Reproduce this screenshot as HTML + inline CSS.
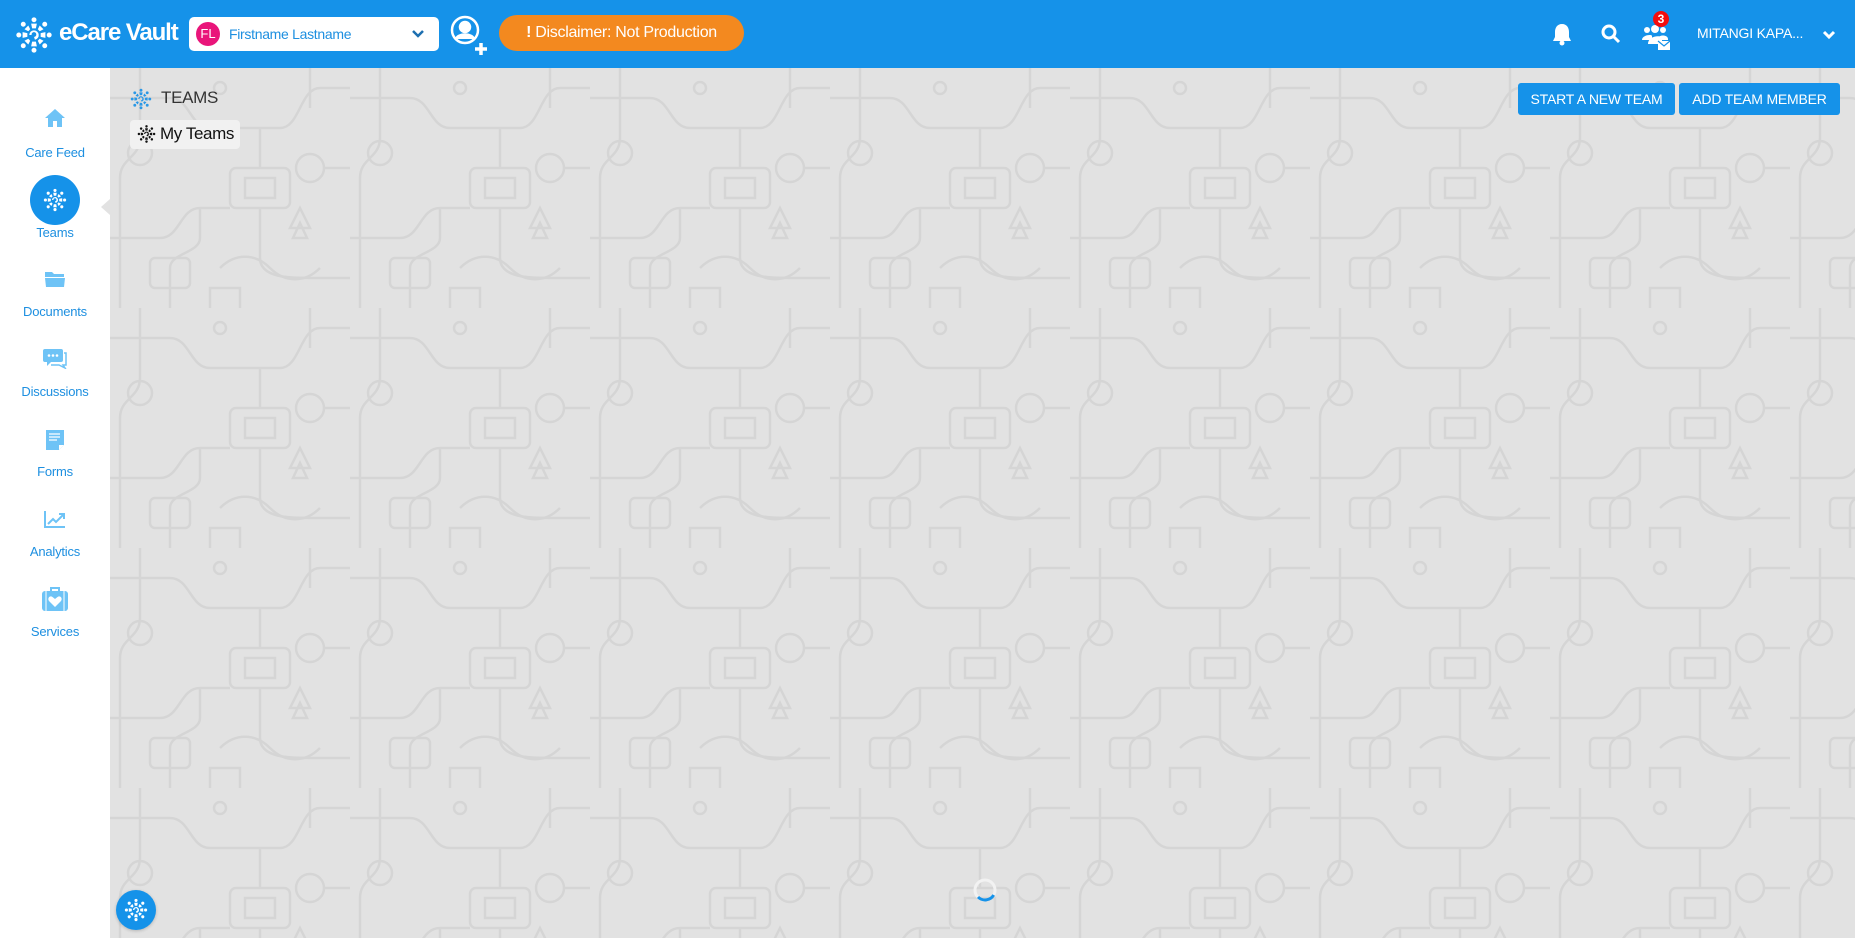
<!DOCTYPE html>
<html><head><meta charset="utf-8">
<style>
*{margin:0;padding:0;box-sizing:border-box}
body{width:1855px;height:938px;overflow:hidden;font-family:"Liberation Sans",sans-serif;background:#e1e1e1;position:relative}
.hdr{position:absolute;left:0;top:0;width:1855px;height:68px;background:#1592e9}
.side{position:absolute;left:0;top:68px;width:110px;height:870px;background:#fff}
.main{position:absolute;left:110px;top:68px;width:1745px;height:870px;background:#e2e2e2;overflow:hidden}
.abs{position:absolute}
.lbl{position:absolute;left:0;width:110px;text-align:center;color:#1d8fe0;font-size:13px;letter-spacing:-0.2px}
.btn{position:absolute;top:83px;height:32px;background:#1592e9;color:#fff;font-size:14px;border-radius:3px;display:flex;align-items:center;justify-content:center;letter-spacing:-0.2px}
</style></head><body>
<svg width="0" height="0" style="position:absolute">
<defs>
<symbol id="flake" viewBox="-20 -20 40 40">
<g>
<circle cx="0" cy="-16" r="2.6"/><circle cx="11.3" cy="-11.3" r="2.6"/><circle cx="16" cy="0" r="2.6"/><circle cx="11.3" cy="11.3" r="2.6"/><circle cx="0" cy="16" r="2.6"/><circle cx="-11.3" cy="11.3" r="2.6"/><circle cx="-16" cy="0" r="2.6"/><circle cx="-11.3" cy="-11.3" r="2.6"/>
<path d="M-3 -12 L3 -12 L2 -7 L-2 -7Z M12 -3 L12 3 L7 2 L7 -2Z M-3 12 L3 12 L2 7 L-2 7Z M-12 -3 L-12 3 L-7 2 L-7 -2Z"/>
<path d="M6 -10 L10 -6 L6 -4 L4 -6Z M10 6 L6 10 L4 6 L6 4Z M-6 10 L-10 6 L-6 4 L-4 6Z M-10 -6 L-6 -10 L-4 -6 L-6 -4Z"/>
<path d="M-5 0 A5 5 0 1 1 1 5 L0 2 A2.5 2.5 0 1 0 -2.5 0Z"/>
</g>
</symbol>
<pattern id="bg" width="240" height="240" patternUnits="userSpaceOnUse">
<g fill="none" stroke="#d5d5d5" stroke-width="2.5">
<path d="M0 30 H60 C80 30 80 60 100 60 H170 C190 60 190 20 210 20 H240"/>
<path d="M30 0 V70 C30 90 10 90 10 110 V240"/>
<circle cx="30" cy="85" r="12"/>
<rect x="120" y="100" width="60" height="40" rx="6"/>
<rect x="135" y="110" width="30" height="20"/>
<path d="M150 60 V100 M150 140 V190 C150 210 180 210 200 210 H240"/>
<path d="M0 170 H50 C70 170 70 140 90 140 H120"/>
<circle cx="200" cy="100" r="14"/>
<path d="M214 100 H240 M60 240 V200 C60 185 90 185 90 170 V140"/>
<rect x="40" y="190" width="40" height="30" rx="5"/>
<path d="M200 0 V40 M100 240 V220 H130 V240"/>
<path d="M180 160 L190 140 L200 160Z M183 170 L190 155 L197 170Z"/>
<circle cx="110" cy="20" r="6"/>
<path d="M110 200 C125 185 145 185 160 200 S195 215 210 200"/>
</g>
</pattern>
</defs>
</svg>

<div class="hdr">
  <svg class="abs" style="left:15px;top:15px" width="38" height="40" fill="#fff"><use href="#flake"/></svg>
  <div class="abs" style="left:59px;top:19px;color:#fff;font-weight:bold;font-size:24px;letter-spacing:-1.1px">eCare Vault</div>
  <div class="abs" style="left:189px;top:17px;width:250px;height:34px;background:#fff;border-radius:5px">
    <div class="abs" style="left:7px;top:5px;width:24px;height:24px;border-radius:50%;background:#e9157a;color:#fff;font-size:13px;line-height:24px;text-align:center">FL</div>
    <div class="abs" style="left:40px;top:9px;color:#1d8fe0;font-size:14px;letter-spacing:-0.3px">Firstname Lastname</div>
    <svg class="abs" style="left:222px;top:12px" width="14" height="10"><path d="M2 2 L7 7 L12 2" stroke="#1d6fb0" stroke-width="2.5" fill="none"/></svg>
  </div>
  <svg class="abs" style="left:449px;top:15px" width="40" height="42" fill="none" stroke="#fff" stroke-width="2.5">
    <circle cx="16" cy="15" r="13"/><circle cx="16" cy="12" r="5" fill="#fff"/><path d="M7 24 C9 18 23 18 25 24" fill="#fff"/>
    <path d="M32 28 V40 M26 34 H38" stroke-width="3.5"/>
  </svg>
  <div class="abs" style="left:499px;top:15px;width:245px;height:36px;background:#f3891f;border-radius:18px;color:#fff;font-size:16px;line-height:36px;text-align:center;letter-spacing:-0.3px"><b>!</b> Disclaimer: Not Production</div>
  <svg class="abs" style="left:1552px;top:22px" width="20" height="24" fill="#fff"><path d="M10 2 C5 2 3 6 3 10 V15 L1 19 H19 L17 15 V10 C17 6 15 2 10 2Z"/><circle cx="10" cy="21" r="2.5"/></svg>
  <svg class="abs" style="left:1601px;top:24px" width="20" height="20" fill="none" stroke="#fff" stroke-width="3"><circle cx="8" cy="8" r="6"/><path d="M12.5 12.5 L18 18"/></svg>
  <svg class="abs" style="left:1641px;top:24px" width="30" height="26" fill="#fff">
    <circle cx="6" cy="6" r="3"/><circle cx="14" cy="5" r="4"/><circle cx="22" cy="6" r="3"/>
    <path d="M1 16 C1 11 11 10 11 12 V16Z M7 20 C7 11 21 11 21 14 V20Z M17 14 C19 10 27 11 27 15 V16 H17Z"/>
    <rect x="17" y="17" width="12" height="9" fill="#fff"/><path d="M17 17 L23 22 L29 17" stroke="#1592e9" fill="none" stroke-width="1.2"/>
  </svg>
  <div class="abs" style="left:1653px;top:11px;width:16px;height:16px;border-radius:50%;background:#f40c0c;color:#fff;font-size:12px;font-weight:bold;text-align:center;line-height:16px">3</div>
  <div class="abs" style="left:1697px;top:25px;color:#fff;font-size:14px;letter-spacing:-0.2px">MITANGI KAPA...</div>
  <svg class="abs" style="left:1822px;top:30px" width="14" height="10"><path d="M2 2 L7 7 L12 2" stroke="#fff" stroke-width="3" fill="none"/></svg>
</div>

<div class="side">
  <svg class="abs" style="left:44px;top:40px" width="22" height="20" fill="#6ec3f6"><path d="M11 1 L21 10 H18 V19 H13 V13 H9 V19 H4 V10 H1Z"/></svg>
  <div class="lbl" style="top:77px">Care Feed</div>
  <div class="abs" style="left:30px;top:107px;width:50px;height:50px;border-radius:50%;background:#1592e9"></div>
  <svg class="abs" style="left:43px;top:120px" width="24" height="24" fill="#fff"><use href="#flake"/></svg>
  <div class="abs" style="left:101px;top:131px;width:0;height:0;border-top:8px solid transparent;border-bottom:8px solid transparent;border-right:9px solid #e2e2e2"></div>
  <div class="lbl" style="top:157px">Teams</div>
  <svg class="abs" style="left:44px;top:202px" width="22" height="18" fill="#6ec3f6"><path d="M1 2 H8 L10 4 H20 V7 H1Z"/><path d="M1 8 H21 L20 17 H2Z"/></svg>
  <div class="lbl" style="top:236px">Documents</div>
  <svg class="abs" style="left:43px;top:281px" width="24" height="20" fill="#6ec3f6"><rect x="0" y="0" width="20" height="13" rx="2"/><path d="M4 13 L4 17 L8 13Z"/><path d="M21 4 H23 V16 H20 L22 19 L16 16 H8" stroke="#6ec3f6" stroke-width="1.5" fill="none"/><circle cx="6" cy="6.5" r="1.3" fill="#fff"/><circle cx="10" cy="6.5" r="1.3" fill="#fff"/><circle cx="14" cy="6.5" r="1.3" fill="#fff"/></svg>
  <div class="lbl" style="top:316px">Discussions</div>
  <svg class="abs" style="left:46px;top:362px" width="19" height="21" fill="#6ec3f6"><path d="M0 0 H18 V15 L13 20 H0Z"/><path d="M3 4 H14 M3 7 H14 M3 10 H11" stroke="#fff" stroke-width="1.3"/><path d="M13 20 V15 H18" fill="#fff"/></svg>
  <div class="lbl" style="top:396px">Forms</div>
  <svg class="abs" style="left:44px;top:442px" width="22" height="18" fill="none" stroke="#6ec3f6" stroke-width="2"><path d="M1 1 V17 H21"/><path d="M4 14 L9 9 L12 12 L19 5" /><path d="M15 4 H20 V9" /></svg>
  <div class="lbl" style="top:476px">Analytics</div>
  <svg class="abs" style="left:42px;top:519px" width="26" height="24" fill="#6ec3f6"><path d="M9 4 V1 H17 V4" stroke="#6ec3f6" stroke-width="2" fill="none"/><rect x="0" y="4" width="26" height="20" rx="3"/><path d="M13 20 L7 14 C5 11 8 8 10.5 10 L13 12 L15.5 10 C18 8 21 11 19 14Z" fill="#fff"/><path d="M4 4 V24 M22 4 V24" stroke="#fff" stroke-width="1"/></svg>
  <div class="lbl" style="top:556px">Services</div>
</div>

<div class="main">
  <svg width="1745" height="870"><rect width="1745" height="870" fill="url(#bg)"/></svg>
</div>

<svg class="abs" style="left:130px;top:88px" width="22" height="22" fill="#2b98e6"><use href="#flake"/></svg>
<div class="abs" style="left:161px;top:88px;color:#333;font-size:17px;letter-spacing:-0.3px">TEAMS</div>
<div class="abs" style="left:130px;top:120px;width:110px;height:29px;background:#f1f1f1;border-radius:4px"></div>
<svg class="abs" style="left:137px;top:124px" width="19" height="20" fill="#111"><use href="#flake"/></svg>
<div class="abs" style="left:160px;top:124px;color:#111;font-size:17px;letter-spacing:-0.4px">My Teams</div>

<div class="btn" style="left:1518px;width:157px">START A NEW TEAM</div>
<div class="btn" style="left:1679px;width:161px">ADD TEAM MEMBER</div>

<svg class="abs" style="left:972px;top:877px" width="26" height="26" fill="none" stroke-width="3"><circle cx="13" cy="13" r="10" stroke="#f2f2f2"/><path d="M21.7 18 A10 10 0 0 1 6 20" stroke="#1592e9"/></svg>

<div class="abs" style="left:116px;top:890px;width:40px;height:40px;border-radius:50%;background:#1592e9;box-shadow:0 1px 3px rgba(0,0,0,.2)"></div>
<svg class="abs" style="left:124px;top:898px" width="24" height="24" fill="#fff"><use href="#flake"/></svg>
</body></html>
